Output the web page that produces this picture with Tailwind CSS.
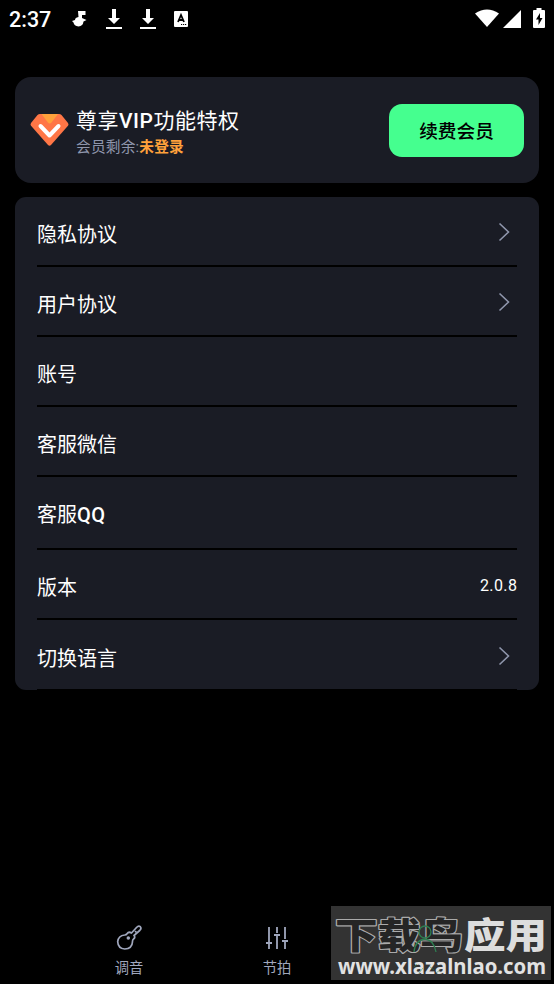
<!DOCTYPE html>
<html lang="zh-CN">
<head>
    <meta charset="UTF-8">
    <meta name="viewport" content="width=device-width, initial-scale=1.0">
    <title>会员中心</title>
    <script src="https://cdn.jsdelivr.net/npm/@tailwindcss/browser@4"></script>
</head>
<body class="bg-black font-[Roboto,'Noto_Sans_CJK_SC',sans-serif]">

    <div class="relative flex flex-col w-[554px] h-[984px] overflow-hidden bg-black text-white">
        <!-- Status Bar -->
        <div class="flex items-center h-[38px] pl-[9px] pr-[9px]">
            <span class="w-[62px] pt-px text-[21.5px] leading-none font-medium">2:37</span>
            <svg class="w-4 h-[18px]" viewBox="0 0 16 18" fill="#fff">
                <path d="M7 1h7.500v4h-3.500v3l4.500 2-3 1.500q-.5 4.500-5 5Q3 16 2.500 12.500L1 11l3-1q0-2.500 3.500-3z"/>
            </svg>
            <svg class="w-4 h-[22px] ml-[19px]" viewBox="0 0 16 22" fill="#fff">
                <path d="M6 1h4v9h4l-6 6-6-6h4zM0 19h16v2H0z"/>
            </svg>
            <svg class="w-4 h-[22px] ml-[18px]" viewBox="0 0 16 22" fill="#fff">
                <path d="M6 1h4v9h4l-6 6-6-6h4zM0 19h16v2H0z"/>
            </svg>
            <svg class="w-[14px] h-4 ml-[18px]" viewBox="0 0 14 16">
                <rect width="14" height="16" rx="1" fill="#fff"/>
                <path d="M4 11l3-7 3 7M5 9h4" fill="none" stroke="#000" stroke-width="1.800"/>
                <path d="M7 13.500h1.200M9 13.500h1.200M11 13.500h1.200" stroke="#000"/>
            </svg>
            <svg class="w-6 h-5 ml-auto" viewBox="0 0 24 20" fill="#fff">
                <path d="M0 4.500Q12-3.500 24 4.500L12 18z"/>
            </svg>
            <svg class="w-[18px] h-[18px] ml-[4px]" viewBox="0 0 18 18" fill="#fff">
                <path d="M18 0v18H0z"/>
            </svg>
            <svg class="w-3 h-5 ml-[12px] mb-0.5" viewBox="0 0 12 20">
                <path d="M3.500 0h5v2H11q1 0 1 1v16q0 1-1 1H1q-1 0-1-1V3q0-1 1-1h2.500z" fill="#fff"/>
                <path d="M7 5L3 11.500h2.500V17L9.500 10H7z" fill="#000"/>
            </svg>
        </div>

        <!-- VIP Card -->
        <div class="flex items-center h-[106px] mt-[39px] mx-[15px] pl-[15px] pr-[15px] rounded-[16px] bg-[#1a1c25]">
            <svg class="w-[39px] h-[34px]" viewBox="0 0 39 34">
                <path d="M10 1h19q1.500 0 2.500 1l6.500 8q1 1.500 0 2.800L21 32q-1.500 1.500-3 0L1 12.800Q0 11.500 1 10L7.500 2Q8.500 1 10 1z" fill="#ff7646"/>
                <path d="M11.500 1h16.500l-6.500 8.500q-1.800 2-3.600 0z" fill="#ffa13b"/>
                <path d="M10.500 13l9 9.500 9-9.500" fill="none" stroke="#fff" stroke-width="4" stroke-linecap="round" stroke-linejoin="round"/>
            </svg>
            <div class="ml-[7px] pt-[5px]">
                <p class="text-[21px] leading-[28px] tracking-[0.5px] whitespace-nowrap">尊享<span class="font-medium">VIP</span>功能特权</p>
                <p class="text-[14.7px] leading-[24px] tracking-[0.2px] text-[#8f96ac] whitespace-nowrap">会员剩余:<span class="font-bold text-[#ffa13b]">未登录</span></p>
            </div>
            <button class="w-[135px] h-[53px] pt-1 ml-auto rounded-[13px] bg-[#45ff8f] text-black text-[18.7px] font-medium">续费会员</button>
        </div>

        <!-- Settings List -->
        <div class="h-[493px] mt-[14px] mx-[15px] px-[22px] rounded-[11px] bg-[#1a1c25] text-[20px]">
            <div class="flex items-center justify-between h-[70px] pt-2 border-b-2 border-black">
                <span>隐私协议</span>
                <svg class="w-3 h-5 mr-[7px] mb-1.5" viewBox="0 0 12 20" fill="none" stroke="#8f96ac" stroke-width="1.600"><path d="M1.500 1.500l9 8.500-9 8.500"/></svg>
            </div>
            <div class="flex items-center justify-between h-[70px] pt-2 border-b-2 border-black">
                <span>用户协议</span>
                <svg class="w-3 h-5 mr-[7px] mb-1.5" viewBox="0 0 12 20" fill="none" stroke="#8f96ac" stroke-width="1.600"><path d="M1.500 1.500l9 8.500-9 8.500"/></svg>
            </div>
            <div class="flex items-center h-[70px] pt-2 border-b-2 border-black">
                <span>账号</span>
            </div>
            <div class="flex items-center h-[70px] pt-2 border-b-2 border-black">
                <span>客服微信</span>
            </div>
            <div class="flex items-center h-[73px] pt-[5px] border-b-2 border-black">
                <span>客服<span class="font-medium tracking-[0.4px]">QQ</span></span>
            </div>
            <div class="flex items-center justify-between h-[70px] pt-2 border-b-2 border-black">
                <span>版本</span>
                <span class="text-[16px] tracking-[0.4px] -mr-[0.4px] mb-1">2.0.8</span>
            </div>
            <div class="flex items-center justify-between h-[70px] pt-2 border-b border-black">
                <span>切换语言</span>
                <svg class="w-3 h-5 mr-[7px] mb-1.5" viewBox="0 0 12 20" fill="none" stroke="#8f96ac" stroke-width="1.600"><path d="M1.500 1.500l9 8.500-9 8.500"/></svg>
            </div>
        </div>

        <!-- Bottom Tabs -->
        <div class="flex mt-auto h-[60px] pl-[55px] text-[#a0a7bd] text-[14.3px]">
            <div class="flex flex-col items-center w-[148px]">
                <svg class="w-[26px] h-[26px]" viewBox="0 0 26 26" fill="none" stroke="#a0a7bd" stroke-width="1.700" stroke-linejoin="round">
                    <path d="M15.500 9l5-5.500q2-2.200 3.800-.8 1.500 1.700-.6 3.800L18 11.500q1.500 1.800-.2 3.300-1.500 1-1.300 3-.3 7-7.800 7.200-6.700-.6-7-7.300.6-6.200 7-6.700 1.600-.2 2.300-1.300 1.700-2.500 4.500-.7z"/>
                    <path d="M19 7l1.500 1.500"/>
                    <circle cx="12.300" cy="14" r=".9" fill="#a0a7bd"/>
                </svg>
                <span class="mt-[8px] leading-[20px]">调音</span>
            </div>
            <div class="flex flex-col items-center w-[148px]">
                <svg class="w-[26px] h-[26px]" viewBox="0 0 26 26" fill="none" stroke="#a0a7bd" stroke-width="1.800">
                    <path d="M5 3v15M5 19v6M2 19h6M13 3v6M13 11v14M10 11h6M21 3v12M21 17v8M18 17h6"/>
                </svg>
                <span class="mt-[8px] leading-[20px]">节拍</span>
            </div>
        </div>

        <!-- Watermark over the third tab -->
        <svg class="absolute left-[331px] top-[906px] w-[220px] h-[74px] bg-[#333] overflow-visible" viewBox="0 0 220 74">
            <g class="font-black font-['Noto_Sans_CJK_SC',sans-serif]" font-size="36" stroke-linejoin="round" paint-order="stroke">
                <text x="4" y="43" textLength="128" lengthAdjust="spacingAndGlyphs" fill="#252525" stroke="#aaa" stroke-width="2.200">下载鸟</text>
                <text x="133" y="43" textLength="83" lengthAdjust="spacingAndGlyphs" fill="#ddd">应用</text>
            </g>
            <g fill="none" stroke="#2e7d50" stroke-width="1.300">
                <circle cx="94" cy="26" r="6"/>
                <path d="M83 46q1-12 11-13 9 1 11 13"/>
            </g>
            <text x="7" y="67.500" textLength="208" lengthAdjust="spacingAndGlyphs" class="font-bold font-['Noto_Sans',sans-serif]" font-size="21" fill="#e2e2e2">www.xlazalnlao.com</text>
            <path d="M83 61l3-3M88 67l4-5M98 60l5 4M105 67l4-3" stroke="#2e7d50" stroke-opacity=".5"/>
        </svg>
    </div>

</body>
</html>
